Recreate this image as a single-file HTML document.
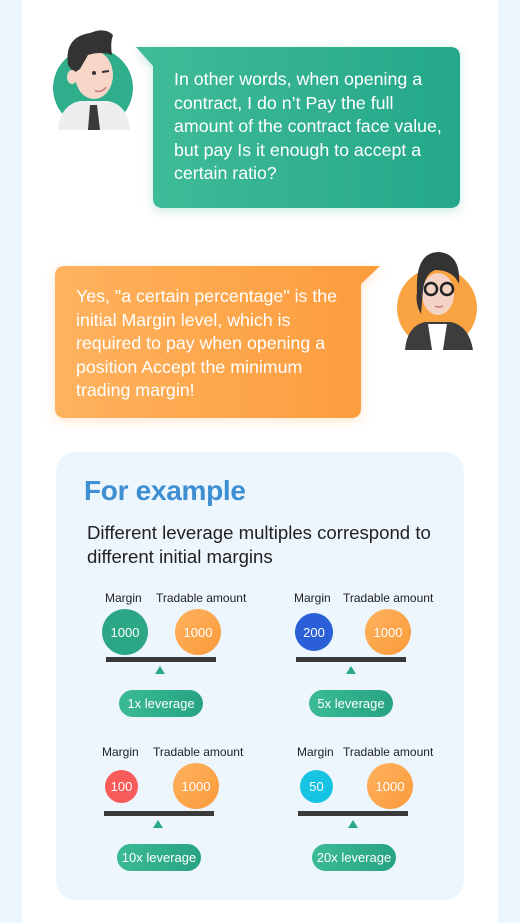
<!DOCTYPE html>
<html><head><meta charset="utf-8"><style>
*{margin:0;padding:0;box-sizing:border-box}
body{width:520px;height:923px;background:#eef6fe;font-family:"Liberation Sans",sans-serif;position:relative;overflow:hidden}
.panel{position:absolute;left:22px;top:0;width:476px;height:923px;background:#fff}
.a{position:absolute}
.bub{position:absolute;color:#fff;font-size:17.8px;line-height:23.5px;white-space:nowrap}
.card{position:absolute;left:56px;top:452px;width:408px;height:448px;background:#edf5fd;border-radius:20px}
.lbl{position:absolute;font-size:12px;color:#222;white-space:nowrap}
.c{position:absolute;border-radius:50%;color:#fff;font-size:13px;display:flex;align-items:center;justify-content:center}
.or{background:linear-gradient(135deg,#ffb25f,#fa9a3a)}
.bar{position:absolute;height:5px;background:#3a3a3a}
.tri{position:absolute;width:0;height:0;border-left:5px solid transparent;border-right:5px solid transparent;border-bottom:8px solid #2aaa88}
.pill{position:absolute;width:84px;height:27px;border-radius:14px;background:linear-gradient(90deg,#3bbb94,#27a382);color:#fff;font-size:13px;display:flex;align-items:center;justify-content:center}
</style></head><body>
<div class="panel"></div>

<svg class="a" style="left:50px;top:25px" width="90" height="110" viewBox="0 0 90 110">
<circle cx="43" cy="63" r="40" fill="#2fae8c"/>
<path d="M8 105 Q10 80 30 76 L58 76 Q78 80 80 105Z" fill="#eeeeee"/>
<path d="M40 80 L47 80 L50 105 L38 105Z" fill="#3a3a3a"/>
<ellipse cx="44" cy="50" rx="19" ry="24" fill="#f7d5c7"/>
<path d="M18 40 Q14 12 40 8 Q55 2 63 10 Q60 18 62 30 Q50 26 38 30 L30 44 L24 48Z" fill="#333"/>
<ellipse cx="22" cy="52" rx="5" ry="7" fill="#f7d5c7"/>
<circle cx="44" cy="48" r="2" fill="#333"/>
<path d="M52 47 L59 46" stroke="#333" stroke-width="2"/>
<path d="M45 66 Q52 68 56 62" stroke="#c77" stroke-width="1.5" fill="none"/>
</svg>

<svg class="a" style="left:130px;top:44px;overflow:visible" width="340" height="175"><defs><linearGradient id="g" x1="0" x2="1"><stop offset="0" stop-color="#40bc98"/><stop offset="1" stop-color="#24a78a"/></linearGradient><filter id="s" x="-20%" y="-20%" width="140%" height="140%"><feDropShadow dx="0" dy="3" stdDeviation="5" flood-color="#2aa886" flood-opacity="0.25"/></filter></defs>
<path d="M6 3 L320 3 Q330 3 330 13 L330 154 Q330 164 320 164 L33 164 Q23 164 23 154 L23 22Z" fill="url(#g)" filter="url(#s)"/></svg>
<div class="bub" style="left:174px;top:68px">In other words, when opening a<br>contract, I do n’t Pay the full<br>amount of the contract face value,<br>but pay Is it enough to accept a<br>certain ratio?</div>

<svg class="a" style="left:50px;top:262px;overflow:visible" width="340" height="162"><defs><linearGradient id="o" x1="0" x2="1"><stop offset="0" stop-color="#ffb25e"/><stop offset="1" stop-color="#fc9c3c"/></linearGradient><filter id="s2" x="-20%" y="-20%" width="140%" height="140%"><feDropShadow dx="0" dy="3" stdDeviation="5" flood-color="#fa9a3a" flood-opacity="0.25"/></filter></defs>
<path d="M15 4 L330 4 L311 22 L311 146 Q311 156 301 156 L15 156 Q5 156 5 146 L5 14 Q5 4 15 4Z" fill="url(#o)" filter="url(#s2)"/></svg>
<div class="bub" style="left:76px;top:285px">Yes, "a certain percentage" is the<br>initial Margin level, which is<br>required to pay when opening a<br>position Accept the minimum<br>trading margin!</div>

<svg class="a" style="left:395px;top:244px" width="90" height="110" viewBox="0 0 90 110">
<circle cx="42" cy="64" r="40" fill="#f9a342"/>
<path d="M10 106 Q12 82 30 78 L56 78 Q74 82 78 106Z" fill="#3d3d3d"/>
<path d="M33 80 L52 80 L48 106 L37 106Z" fill="#fff"/>
<ellipse cx="43" cy="50" rx="16" ry="21" fill="#f5d3c4"/>
<path d="M22 48 Q20 8 44 8 Q66 10 64 40 Q58 26 40 26 Q30 30 28 46 L26 70 Q20 60 22 48Z" fill="#333"/>
<circle cx="36" cy="45" r="6" fill="none" stroke="#222" stroke-width="2.5"/>
<circle cx="52" cy="45" r="6" fill="none" stroke="#222" stroke-width="2.5"/>
<path d="M40 62 Q44 64 48 62" stroke="#c77" stroke-width="1.5" fill="none"/>
</svg>

<div class="card"></div>
<div class="a" style="left:84px;top:475px;font-size:28px;font-weight:bold;color:#3d8fd2;letter-spacing:-0.3px">For example</div>
<div class="a" style="left:87px;top:521px;font-size:18.6px;line-height:24px;color:#222;white-space:nowrap">Different leverage multiples correspond to<br>different initial margins</div>

<div class="lbl" style="left:105px;top:591px">Margin</div><div class="lbl" style="left:156px;top:591px">Tradable amount</div>
<div class="c" style="left:102px;top:609px;width:46px;height:46px;background:#2ba786">1000</div>
<div class="c or" style="left:175px;top:609px;width:46px;height:46px">1000</div>
<div class="bar" style="left:106px;top:657px;width:110px"></div>
<div class="tri" style="left:155px;top:666px"></div>
<div class="pill" style="left:119px;top:690px">1x leverage</div>

<div class="lbl" style="left:294px;top:591px">Margin</div><div class="lbl" style="left:343px;top:591px">Tradable amount</div>
<div class="c" style="left:295px;top:613px;width:38px;height:38px;background:#2a5fd8">200</div>
<div class="c or" style="left:365px;top:609px;width:46px;height:46px">1000</div>
<div class="bar" style="left:296px;top:657px;width:110px"></div>
<div class="tri" style="left:346px;top:666px"></div>
<div class="pill" style="left:309px;top:690px">5x leverage</div>

<div class="lbl" style="left:102px;top:745px">Margin</div><div class="lbl" style="left:153px;top:745px">Tradable amount</div>
<div class="c" style="left:105px;top:770px;width:33px;height:33px;background:#f75c5a">100</div>
<div class="c or" style="left:173px;top:763px;width:46px;height:46px">1000</div>
<div class="bar" style="left:104px;top:811px;width:110px"></div>
<div class="tri" style="left:153px;top:820px"></div>
<div class="pill" style="left:117px;top:844px">10x leverage</div>

<div class="lbl" style="left:297px;top:745px">Margin</div><div class="lbl" style="left:343px;top:745px">Tradable amount</div>
<div class="c" style="left:300px;top:770px;width:33px;height:33px;background:#17c3e2">50</div>
<div class="c or" style="left:367px;top:763px;width:46px;height:46px">1000</div>
<div class="bar" style="left:298px;top:811px;width:110px"></div>
<div class="tri" style="left:348px;top:820px"></div>
<div class="pill" style="left:312px;top:844px">20x leverage</div>
</body></html>
